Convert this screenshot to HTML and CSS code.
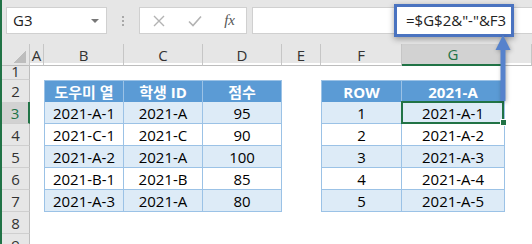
FILE: index.html
```html
<!DOCTYPE html>
<html lang="ko">
<head>
    <!-- Define character encoding -->
    <meta charset="UTF-8">
    <meta name="viewport" content="width=device-width, initial-scale=1.0">
    <title>Helper Column</title>
    <link rel="stylesheet" href="styles.css">
</head>
<body>
    <div class="app">
        <!-- Name box and formula bar -->
        <div class="toolbar">
            <div class="name-box">G3<span class="caret"></span></div>
            <div class="grip"><i></i><i></i><i></i></div>
            <div class="fx-box">
                <svg width="12" height="12" viewBox="0 0 12 12"><path d="M1 1 L11 11 M11 1 L1 11" stroke="#b3b3b3" stroke-width="1.4" fill="none"/></svg>
                <svg width="14" height="12" viewBox="0 0 14 12"><path d="M1 6.5 L5 10.5 L13 1.5" stroke="#b3b3b3" stroke-width="1.6" fill="none"/></svg>
                <span class="fx">fx</span>
            </div>
            <div class="formula-input"></div>
        </div>

        <!-- Worksheet grid -->
        <div class="sheet">
            <div class="row heads">
                <div class="corner"><span class="tri"></span></div>
                <div class="ch">A</div>
                <div class="ch">B</div>
                <div class="ch">C</div>
                <div class="ch">D</div>
                <div class="ch">E</div>
                <div class="ch">F</div>
                <div class="ch active">G</div>
                <div class="ch"></div>
            </div>
            <div class="row r1">
                <div class="rh"><span>1</span></div>
                <div></div><div></div><div></div><div></div><div></div><div></div><div></div><div></div>
            </div>
            <div class="row">
                <div class="rh">2</div>
                <div></div>
                <div class="c th first top">도우미 열</div>
                <div class="c th top">학생 ID</div>
                <div class="c th top">점수</div>
                <div></div>
                <div class="c th first top">ROW</div>
                <div class="c th top">2021-A</div>
                <div></div>
            </div>
            <div class="row">
                <div class="rh active">3</div>
                <div></div>
                <div class="c band first">2021-A-1</div>
                <div class="c band">2021-A</div>
                <div class="c band">95</div>
                <div></div>
                <div class="c band first">1</div>
                <div class="c band selected">2021-A-1</div>
                <div></div>
            </div>
            <div class="row">
                <div class="rh">4</div>
                <div></div>
                <div class="c first">2021-C-1</div>
                <div class="c">2021-C</div>
                <div class="c">90</div>
                <div></div>
                <div class="c first">2</div>
                <div class="c">2021-A-2</div>
                <div></div>
            </div>
            <div class="row">
                <div class="rh">5</div>
                <div></div>
                <div class="c band first">2021-A-2</div>
                <div class="c band">2021-A</div>
                <div class="c band">100</div>
                <div></div>
                <div class="c band first">3</div>
                <div class="c band">2021-A-3</div>
                <div></div>
            </div>
            <div class="row">
                <div class="rh">6</div>
                <div></div>
                <div class="c first">2021-B-1</div>
                <div class="c">2021-B</div>
                <div class="c">85</div>
                <div></div>
                <div class="c first">4</div>
                <div class="c">2021-A-4</div>
                <div></div>
            </div>
            <div class="row">
                <div class="rh">7</div>
                <div></div>
                <div class="c band first">2021-A-3</div>
                <div class="c band">2021-A</div>
                <div class="c band">80</div>
                <div></div>
                <div class="c band first">5</div>
                <div class="c band">2021-A-5</div>
                <div></div>
            </div>
            <div class="row">
                <div class="rh">8</div>
                <div></div><div></div><div></div><div></div><div></div><div></div><div></div><div></div>
            </div>
            <div class="row r9">
                <div class="rh">9</div>
                <div></div><div></div><div></div><div></div><div></div><div></div><div></div><div></div>
            </div>
        </div>

        <!-- Highlighted formula callout and arrow -->
        <div class="callout">=$G$2&amp;"-"&amp;F3</div>
        <svg class="arrow" width="24" height="72" viewBox="0 0 24 72">
            <path d="M12 14 L12 68" stroke="#5682cc" stroke-width="5" fill="none"/>
            <path d="M4.5 17 L12 2 L19.5 17 Z" fill="#5682cc"/>
        </svg>
    </div>
</body>
</html>
```

FILE: styles.css
```css
/* Page reset */
body {
    margin: 0; /* Remove default margin */
    background-color: #ffffff;
    font-family: "Open Sans", "Noto Sans CJK KR", sans-serif;
    color: #000000;
}

/* Whole window */
.app {
    position: relative;
    width: 530px;
    height: 244px;
    overflow: hidden;
    border-left: 2px solid #217346; /* Excel green edge */
}

/* Formula bar strip */
.toolbar {
    display: flex;
    align-items: center;
    height: 44px;
    padding-left: 4px;
    background-color: #e6e6e6;
    box-sizing: border-box;
    padding-bottom: 3px;
}

.name-box {
    position: relative;
    width: 101px;
    height: 27px;
    box-sizing: border-box;
    background-color: #ffffff;
    border: 1px solid #d0d0d0;
    padding-left: 6px;
    font-size: 15px;
    line-height: 25px;
    color: #222222;
}

/* Small dropdown triangle */
.caret {
    position: absolute;
    right: 7px;
    top: 11px;
    border-left: 4px solid transparent;
    border-right: 4px solid transparent;
    border-top: 4px solid #777777;
}

/* Vertical dots between boxes */
.grip {
    display: flex;
    flex-direction: column;
    gap: 2px;
    width: 32px;
    align-items: center;
}

.grip i {
    width: 2px;
    height: 2px;
    background-color: #a8a8a8;
}

.fx-box {
    display: flex;
    align-items: center;
    justify-content: space-between;
    width: 108px;
    height: 27px;
    box-sizing: border-box;
    background-color: #ffffff;
    border: 1px solid #d0d0d0;
    padding: 0 11px 0 13px;
}

.fx {
    font-family: "Liberation Serif", serif;
    font-style: italic;
    font-size: 15px;
    color: #555555;
}

.formula-input {
    flex: 1;
    height: 27px;
    margin-left: 5px;
    background-color: #ffffff;
    border: 1px solid #d0d0d0;
    border-right: none;
    box-sizing: border-box;
}

/* Each sheet row shares the same column widths */
.row {
    display: grid;
    grid-template-columns: 28px 14px 80px 79px 79px 39px 81px 103px 1fr;
    height: 22px;
    font-size: 15px;
}

.row > div {
    display: flex;
    align-items: center;
    justify-content: center;
    box-sizing: border-box;
}

/* Column letters */
.heads {
    height: 19px;
    background-color: #e6e6e6;
}

.heads > div {
    border-right: 1px solid #c6c6c6;
    border-bottom: 1px solid #bdbdbd;
    color: #333333;
}

.corner {
    position: relative;
}

/* Grey select-all triangle */
.tri {
    position: absolute;
    right: 3px;
    bottom: 2px;
    width: 13px;
    height: 13px;
    background: linear-gradient(to bottom right, transparent 50%, #bdbdbd 50%);
}

.heads > .ch.active {
    background-color: #d2d2d2;
    color: #217346;
    border-bottom: 2px solid #217346;
}

/* Row numbers */
.rh {
    background-color: #e6e6e6;
    border-right: 1px solid #bdbdbd;
    border-bottom: 1px solid #cfcfcf;
    color: #333333;
}

.rh.active {
    background-color: #d2d2d2;
    color: #217346;
    border-right: 2px solid #217346;
}

/* Row 1 is scrolled partly under the headers */
.r1 {
    height: 17px;
    overflow: hidden;
}

.r1 .rh {
    align-items: flex-end;
    overflow: hidden;
}

.r1 .rh span {
    line-height: 15px;
    height: 13px;
    overflow: hidden;
    display: flex;
    align-items: flex-end;
}

.r9 {
    height: 10px;
    overflow: hidden;
}

.r9 .rh {
    align-items: flex-start;
    line-height: 22px;
}

/* Table cells */
.c {
    border-right: 1px solid #9bc2e6;
    border-bottom: 1px solid #9bc2e6;
}

.c.first {
    border-left: 1px solid #9bc2e6;
}

.c.top {
    border-top: 1px solid #9bc2e6;
}

.c.th {
    background-color: #5b9bd5;
    color: #ffffff;
    font-weight: bold;
}

.c.band {
    background-color: #ddebf7;
}

/* Active cell outline */
.c.selected {
    position: relative;
}

.c.selected::before {
    content: "";
    position: absolute;
    left: -1px;
    top: -1px;
    right: 0;
    bottom: -1px;
    border: 2px solid #217346;
}

.c.selected::after {
    content: "";
    position: absolute;
    right: -3px;
    bottom: -3px;
    width: 5px;
    height: 5px;
    background-color: #217346;
    border: 1px solid #ffffff;
}

/* Formula callout over the formula bar */
.callout {
    position: absolute;
    left: 392px;
    top: 4px;
    width: 120px;
    height: 33px;
    box-sizing: border-box;
    border: 3px solid #4a73c0;
    background-color: #ffffff;
    box-shadow: 0 2px 6px rgba(0, 0, 0, 0.35);
    font-size: 15px;
    line-height: 27px;
    padding-left: 9px;
    color: #222222;
}

.arrow {
    position: absolute;
    left: 489px;
    top: 33px;
    filter: drop-shadow(1px 1px 2px rgba(0, 0, 0, 0.3));
}
```
